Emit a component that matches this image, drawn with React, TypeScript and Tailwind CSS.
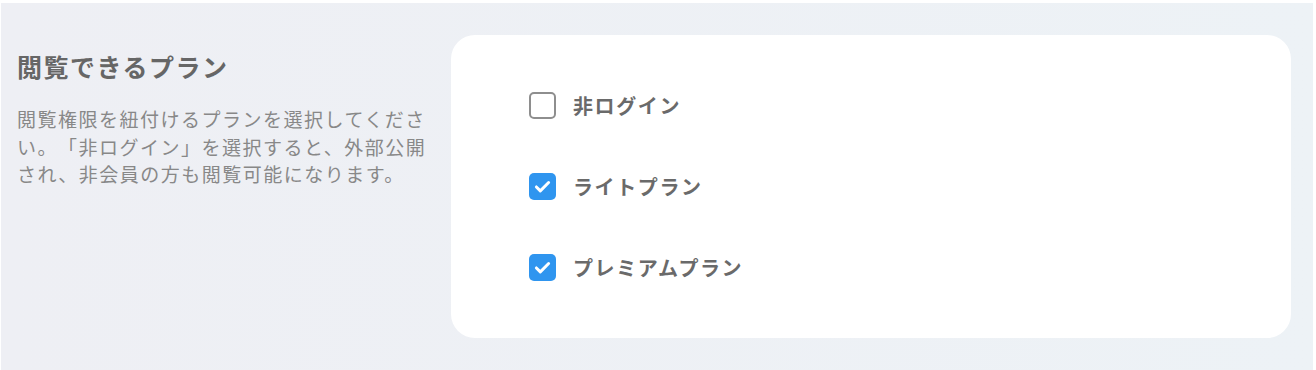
import { useState } from "react";

const plans = [
    { id: "guest", label: "非ログイン" },
    { id: "light", label: "ライトプラン" },
    { id: "premium", label: "プレミアムプラン" },
];

function CheckBox({ checked }: { checked: boolean }) {
    return checked ? (
        <span className="flex h-[27px] w-[27px] shrink-0 items-center justify-center rounded-[5px] bg-[#2f95ef]">
            <svg viewBox="0 0 24 24" className="h-[21px] w-[21px]" fill="none">
                <path
                    d="M5 12.5l4.5 4.5L19 7.5"
                    stroke="white"
                    strokeWidth="3.4"
                    strokeLinecap="round"
                    strokeLinejoin="round"
                />
            </svg>
        </span>
    ) : (
        <span className="h-[27px] w-[27px] shrink-0 rounded-[5px] border-2 border-[#8e8e8e] bg-white" />
    );
}

export default function App() {
    const [selected, setSelected] = useState<string[]>(["light", "premium"]);

    const toggle = (id: string) => {
        setSelected((prev) =>
            prev.includes(id) ? prev.filter((p) => p !== id) : [...prev, id],
        );
    };

    return (
        <div className="bg-white pt-[3px] pr-[3px] pl-[1px] pb-[1px] font-['Noto_Sans_CJK_JP','Noto_Sans',sans-serif] [text-spacing-trim:space-all]">
            <div className="flex bg-gradient-to-r from-[#eeeff4] to-[#edf2f6] pt-[32px] pb-[32px] pl-4 pr-[22px]">
                <div className="w-[434px] shrink-0 pt-[14px]">
                    <h2 className="text-[25px] font-bold leading-[34px] tracking-[1.5px] text-[#666666]">
                        閲覧できるプラン
                    </h2>
                    <p className="mt-[22px] w-[420px] text-[19px] leading-[27.5px] tracking-[1.5px] text-[#888888]">
                        閲覧権限を紐付けるプランを選択してください。「非ログイン」を選択すると、外部公開され、非会員の方も閲覧可能になります。
                    </p>
                </div>
                <div className="flex flex-1 flex-col gap-[54px] rounded-[24px] bg-white py-[57px] pl-[78px]">
                    {plans.map((plan) => (
                        <div
                            key={plan.id}
                            className="flex cursor-pointer items-center gap-[17px]"
                            onClick={() => toggle(plan.id)}
                        >
                            <CheckBox checked={selected.includes(plan.id)} />
                            <span className="text-[20px] font-bold leading-[27px] tracking-[1.6px] text-[#6a6a6a]">
                                {plan.label}
                            </span>
                        </div>
                    ))}
                </div>
            </div>
        </div>
    );
}
